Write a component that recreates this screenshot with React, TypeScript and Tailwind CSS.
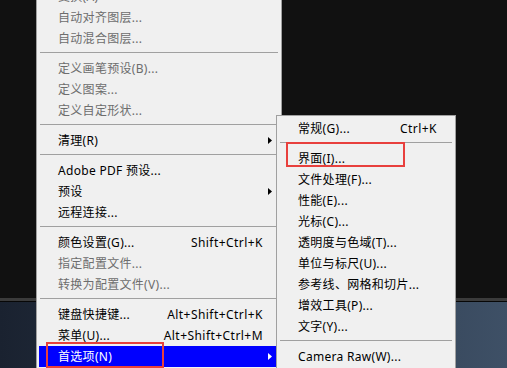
import clsx from 'clsx';

type Item = {
    label?: string;
    shortcut?: string;
    disabled?: boolean;
    arrow?: boolean;
    sep?: boolean;
    active?: boolean;
};

const mainItems: Item[] = [
    { label: '变换(A)', arrow: true, disabled: true },
    { label: '自动对齐图层...', disabled: true },
    { label: '自动混合图层...', disabled: true },
    { sep: true },
    { label: '定义画笔预设(B)...', disabled: true },
    { label: '定义图案...', disabled: true },
    { label: '定义自定形状...', disabled: true },
    { sep: true },
    { label: '清理(R)', arrow: true },
    { sep: true },
    { label: 'Adobe PDF 预设...' },
    { label: '预设', arrow: true },
    { label: '远程连接...' },
    { sep: true },
    { label: '颜色设置(G)...', shortcut: 'Shift+Ctrl+K' },
    { label: '指定配置文件...', disabled: true },
    { label: '转换为配置文件(V)...', disabled: true },
    { sep: true },
    { label: '键盘快捷键...', shortcut: 'Alt+Shift+Ctrl+K' },
    { label: '菜单(U)...', shortcut: 'Alt+Shift+Ctrl+M' },
    { label: '首选项(N)', arrow: true, active: true },
];

const subItems: Item[] = [
    { label: '常规(G)...', shortcut: 'Ctrl+K' },
    { sep: true },
    { label: '界面(I)...' },
    { label: '文件处理(F)...' },
    { label: '性能(E)...' },
    { label: '光标(C)...' },
    { label: '透明度与色域(T)...' },
    { label: '单位与标尺(U)...' },
    { label: '参考线、网格和切片...' },
    { label: '增效工具(P)...' },
    { label: '文字(Y)...' },
    { sep: true },
    { label: 'Camera Raw(W)...' },
];

function Arrow({ white }: { white?: boolean }) {
    return (
        <svg width="4" height="7" viewBox="0 0 4 7" className="block">
            <path d="M0 0 L4 3.5 L0 7 Z" fill={white ? '#ffffff' : '#000000'} />
        </svg>
    );
}

function MenuRow({ item }: { item: Item }) {
    if (item.sep) {
        return (
            <div className="h-[9px] pt-[3px] mx-[3px]">
                <div className="h-px bg-[#a0a0a0]" />
            </div>
        );
    }
    return (
        <div
            className={clsx(
                'h-[21px] mx-[2px] flex items-center pl-[19px]',
                item.active ? 'bg-[#0000ff] text-white' : item.disabled ? 'text-[#6d6d6d]' : 'text-black'
            )}
        >
            <span className="flex-1 whitespace-nowrap tracking-[0.3px]">{item.label}</span>
            {item.shortcut && <span className="whitespace-nowrap tracking-[0.45px]">{item.shortcut}</span>}
            <span className="w-[16px] pl-[5px] flex items-center">
                {item.arrow && <Arrow white={item.active} />}
            </span>
        </div>
    );
}

export default function App() {
    return (
        <div className="relative w-[507px] h-[368px] overflow-hidden bg-[#111111] font-['Noto_Sans','Noto_Sans_CJK_SC',sans-serif] text-[12px] leading-none">
            {/* Background: workspace + bottom panel */}
            <div className="flex flex-col h-full">
                <div className="h-[298px] bg-[#111111]" />
                <div className="h-[3px] bg-[#3b3b3b]" />
                <div className="h-px bg-[#070707]" />
                <div className="flex-1 bg-gradient-to-r from-[#1a2230] to-[#3e5066]" />
            </div>

            {/* Edit menu */}
            <div className="absolute left-[36px] top-[-17px] w-[246px] border border-[#a0a0a0] bg-[#f0f0f0] pt-[2px] pb-[2px]">
                {mainItems.map((item, i) => (
                    <MenuRow key={i} item={item} />
                ))}
            </div>

            {/* Preferences submenu */}
            <div className="absolute left-[276px] top-[115px] w-[180px] border border-[#a0a0a0] bg-[#f0f0f0] pt-[2px] pb-[2px]">
                {subItems.map((item, i) => (
                    <MenuRow key={i} item={item} />
                ))}
            </div>

            {/* Highlight boxes */}
            <div className="absolute left-[286px] top-[142px] w-[119px] h-[25px] border-2 border-[#e8403d]" />
            <div className="absolute left-[46px] top-[342px] w-[118px] h-[26px] border-2 border-[#e8403d]" />
        </div>
    );
}
